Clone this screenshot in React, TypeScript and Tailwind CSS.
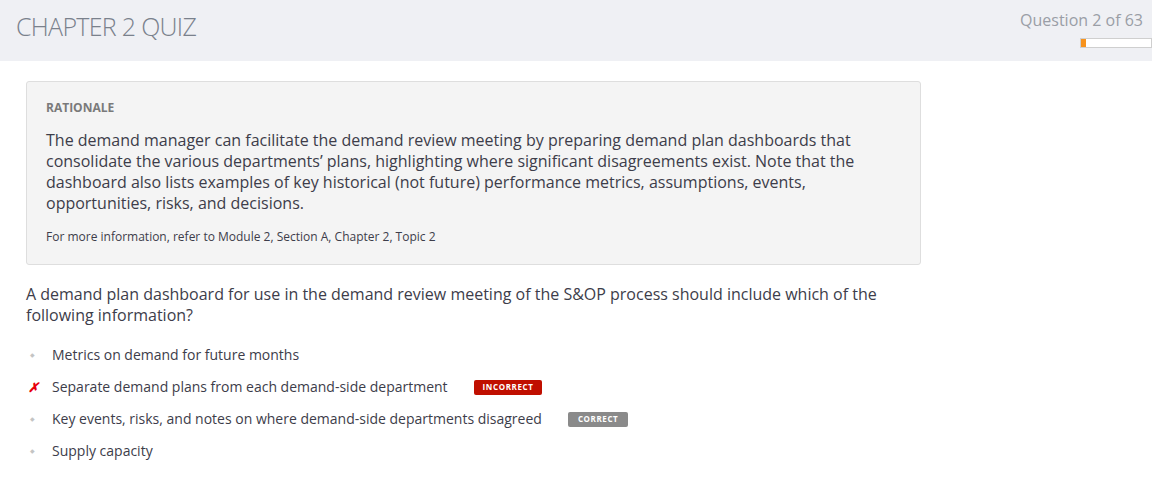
import React from "react";

const font = { fontFamily: '"Open Sans", "Noto Sans", sans-serif' };

interface Option {
    text: string;
    mark?: "wrong";
    badge?: "incorrect" | "correct";
}

const options: Option[] = [
    { text: "Metrics on demand for future months" },
    { text: "Separate demand plans from each demand-side department", mark: "wrong", badge: "incorrect" },
    { text: "Key events, risks, and notes on where demand-side departments disagreed", badge: "correct" },
    { text: "Supply capacity" },
];

function Badge({ kind }: { kind: "incorrect" | "correct" }) {
    if (kind === "incorrect") {
        return (
            <span className="ml-[26px] inline-flex h-[15px] items-center rounded-[2px] bg-[#c00f00] px-[9px] text-[8px] font-bold tracking-[0.6px] text-white">
                INCORRECT
            </span>
        );
    }
    return (
        <span className="ml-[26px] inline-flex h-[15px] items-center rounded-[2px] bg-[#8a8a8a] px-[10px] text-[8px] font-bold tracking-[0.6px] text-white">
            CORRECT
        </span>
    );
}

export default function App() {
    return (
        <div className="min-h-[477px] w-[1152px] bg-white" style={font}>
            <div className="flex h-[61px] justify-between bg-[#eff0f4]">
                <h1 className="pl-[16px] pt-[8px] text-[25px] font-light leading-[36px] tracking-[-0.7px] text-[#7a818c]">CHAPTER 2 QUIZ</h1>
                <div className="flex flex-col items-end pt-[9px] pr-[9px]">
                    <div className="text-[16px] leading-[22px] text-[#9a9ea6]">Question 2 of 63</div>
                    <div className="mt-[7px] -mr-[9px] h-[10px] w-[72px] border border-[#cfcfcf] bg-white">
                        <div className="h-full w-[5px] bg-[#f7931e]" />
                    </div>
                </div>
            </div>

            <div className="px-[26px] pt-[20px]">
                <div className="w-[895px] rounded-[3px] border border-[#dedede] bg-[#f4f4f4] px-[19px] pt-[18px] pb-[19px]">
                    <div className="text-[12px] font-bold leading-[16px] text-[#7a7a7a]">RATIONALE</div>
                    <p className="mt-[14px] text-[16px] leading-[21px] text-[#3d3d4a]">
                        The demand manager can facilitate the demand review meeting by preparing demand plan dashboards that consolidate the various departments’ plans, highlighting where significant disagreements exist. Note that the dashboard also lists examples of key historical (not future) performance metrics, assumptions, events, opportunities, risks, and decisions.
                    </p>
                    <p className="mt-[14px] text-[12px] leading-[17px] text-[#3d3d4a]">
                        For more information, refer to Module 2, Section A, Chapter 2, Topic 2
                    </p>
                </div>

                <p className="mt-[19px] w-[880px] text-[16px] leading-[21px] text-[#3d3d4a]">
                    A demand plan dashboard for use in the demand review meeting of the S&amp;OP process should include which of the following information?
                </p>

                <ul className="mt-[19px] flex flex-col gap-[12px]">
                    {options.map((o) => (
                        <li key={o.text} className="flex h-[20px] items-center">
                            <span className="flex w-[26px] items-center pl-[2px]">
                                {o.mark === "wrong" ? (
                                    <span className="text-[13px] font-bold italic leading-none text-[#e8000b]">✗</span>
                                ) : (
                                    <span className="pl-[2px] text-[6px] leading-none text-[#c4c4c4]">◆</span>
                                )}
                            </span>
                            <span className="text-[14px] leading-[20px] text-[#3d3d4a]">{o.text}</span>
                            {o.badge && <Badge kind={o.badge} />}
                        </li>
                    ))}
                </ul>
            </div>
        </div>
    );
}
